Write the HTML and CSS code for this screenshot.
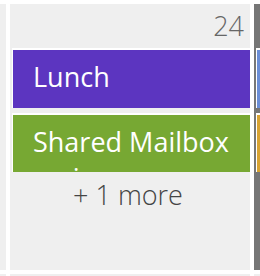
FILE: index.html
```html
<!DOCTYPE html>
<html lang="en">
<head>
    <meta charset="UTF-8">
    <meta name="viewport" content="width=device-width, initial-scale=1.0">
    <title>Month View</title>
    <link rel="stylesheet" href="styles.css">
</head>
<body>
    <div class="month">
        <div class="day">
            <div class="date">23</div>
        </div>
        <div class="day">
            <div class="date">24</div>
            <div class="events">
                <div class="event lunch">Lunch</div>
                <div class="event mailbox">Shared Mailbox review</div>
            </div>
            <div class="more">+ 1 more</div>
        </div>
        <div class="day today">
            <div class="date">25</div>
            <div class="events">
                <div class="event blue">Standup</div>
                <div class="event orange">Review</div>
            </div>
        </div>
        <div class="day"></div>
        <div class="day"></div>
        <div class="day"></div>
    </div>
</body>
</html>
```
FILE: styles.css
```css
body {
    margin: 0;
    background: #fff;
    overflow: hidden;
    font-family: "Open Sans", "Noto Sans", sans-serif;
}
.month {
    display: grid;
    grid-template-columns: repeat(3, 240px);
    gap: 4px;
    margin-left: -234px;
    padding-top: 4px;
}
.day {
    background: #efefef;
    height: 266px;
    padding: 4px 6px 0 2px;
    box-sizing: border-box;
    display: flex;
    flex-direction: column;
    overflow: hidden;
}
.day.today {
    background: #767676;
}
.date {
    text-align: right;
    font-size: 27px;
    font-weight: 300;
    line-height: 36px;
    color: #666;
    margin-bottom: 4px;
}
.today .date {
    color: #fff;
}
.events {
    margin-right: -6px;
    height: 124px;
    overflow: hidden;
    flex-shrink: 0;
}
.event {
    height: 60px;
    box-sizing: border-box;
    border-top: 2px solid #fff;
    border-left: 1px solid #fff;
    padding: 9px 0 0 20px;
    margin-bottom: 5px;
    font-size: 27px;
    line-height: 36px;
    color: #fff;
    overflow: hidden;
}
.lunch {
    background: #5c35c0;
}
.mailbox {
    background: #77a833;
}
.blue {
    background: #6b8ed6;
}
.orange {
    background: #d8a331;
}
.more {
    text-align: center;
    font-size: 27px;
    font-weight: 300;
    line-height: 36px;
    color: #444;
    margin-top: 5px;
}
```
